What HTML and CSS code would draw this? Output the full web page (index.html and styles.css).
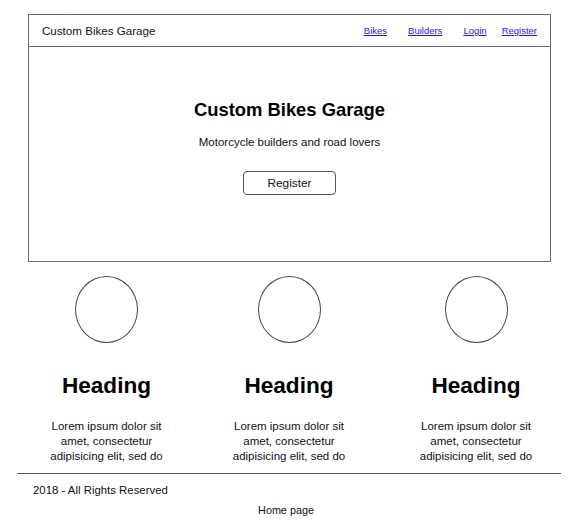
FILE: index.html
```html
<!DOCTYPE html>
<html>
<head>
<meta charset="utf-8">
<link rel="stylesheet" href="styles.css">
</head>
<body>
<div class="page">
  <div class="frame">
    <nav class="nav">
      <span class="brand">Custom Bikes Garage</span>
      <div class="links">
        <a href="#" class="link">Bikes</a>
        <a href="#" class="link">Builders</a>
        <a href="#" class="link">Login</a>
        <a href="#" class="link link-last">Register</a>
      </div>
    </nav>
    <section class="hero">
      <h1 class="hero-title">Custom Bikes Garage</h1>
      <p class="hero-sub">Motorcycle builders and road lovers</p>
      <button class="btn">Register</button>
    </section>
  </div>
  <section class="features">
    <div class="feature">
      <div class="circle"></div>
      <h2 class="feature-title">Heading</h2>
      <p class="feature-text">Lorem ipsum dolor sit<br>amet, consectetur<br>adipisicing elit, sed do</p>
    </div>
    <div class="feature">
      <div class="circle"></div>
      <h2 class="feature-title">Heading</h2>
      <p class="feature-text">Lorem ipsum dolor sit<br>amet, consectetur<br>adipisicing elit, sed do</p>
    </div>
    <div class="feature">
      <div class="circle"></div>
      <h2 class="feature-title">Heading</h2>
      <p class="feature-text">Lorem ipsum dolor sit<br>amet, consectetur<br>adipisicing elit, sed do</p>
    </div>
  </section>
  <footer class="footer">
    <p class="copy">2018 - All Rights Reserved</p>
  </footer>
</div>
<p class="caption">Home page</p>
</body>
</html>
```
FILE: styles.css
```css
html, body {
  margin: 0;
  padding: 0;
  background: #fff;
  color: #111;
  font-family: "Liberation Sans", Arial, sans-serif;
}
.page {
  width: 544px;
  margin-left: 17px;
  padding-top: 14px;
}
.frame {
  margin: 0 10px 0 11px;
  border: 1px solid #6e6e6e;
  height: 246px;
  display: flex;
  flex-direction: column;
}
.nav {
  height: 31px;
  border-bottom: 1px solid #6e6e6e;
  display: flex;
  align-items: center;
  justify-content: space-between;
  padding: 0 13px;
}
.brand {
  font-size: 11.6px;
  color: #111;
}
.links {
  display: flex;
  gap: 21px;
}
.link {
  font-size: 9.5px;
  color: #1a1adb;
  text-decoration: underline;
}
.link-last {
  margin-left: -6px;
}
.hero {
  display: flex;
  flex-direction: column;
  align-items: center;
  padding-top: 51px;
}
.hero-title {
  margin: 0;
  font-size: 18.4px;
  font-weight: bold;
  line-height: 24px;
  color: #000;
}
.hero-sub {
  margin: 13px 0 0;
  font-size: 11.5px;
  line-height: 14px;
}
.btn {
  margin-top: 22px;
  width: 93px;
  height: 24px;
  border: 1px solid #555;
  border-radius: 4px;
  background: #fff;
  font-family: "Liberation Sans", Arial, sans-serif;
  font-size: 11.8px;
  color: #111;
  padding: 0;
}
.features {
  display: grid;
  grid-template-columns: 179px 186px 188px;
  padding-top: 14px;
  height: 197px;
  overflow: hidden;
}
.feature {
  display: flex;
  flex-direction: column;
  align-items: center;
}
.circle {
  width: 61px;
  height: 65px;
  border: 1px solid #444;
  border-radius: 50%;
}
.feature-title {
  margin: 29px 0 0;
  font-size: 22.6px;
  line-height: 28px;
  font-weight: bold;
  color: #000;
}
.feature-text {
  margin: 19px 0 0;
  font-size: 11.5px;
  line-height: 15px;
  text-align: center;
}
.footer {
  border-top: 1px solid #555;
}
.copy {
  margin: 0;
  padding: 9px 0 0 16px;
  font-size: 11.4px;
  line-height: 14px;
}
.caption {
  margin: 6px 0 0;
  text-align: center;
  padding-right: 10px;
  font-size: 10.8px;
  line-height: 14px;
}
```
